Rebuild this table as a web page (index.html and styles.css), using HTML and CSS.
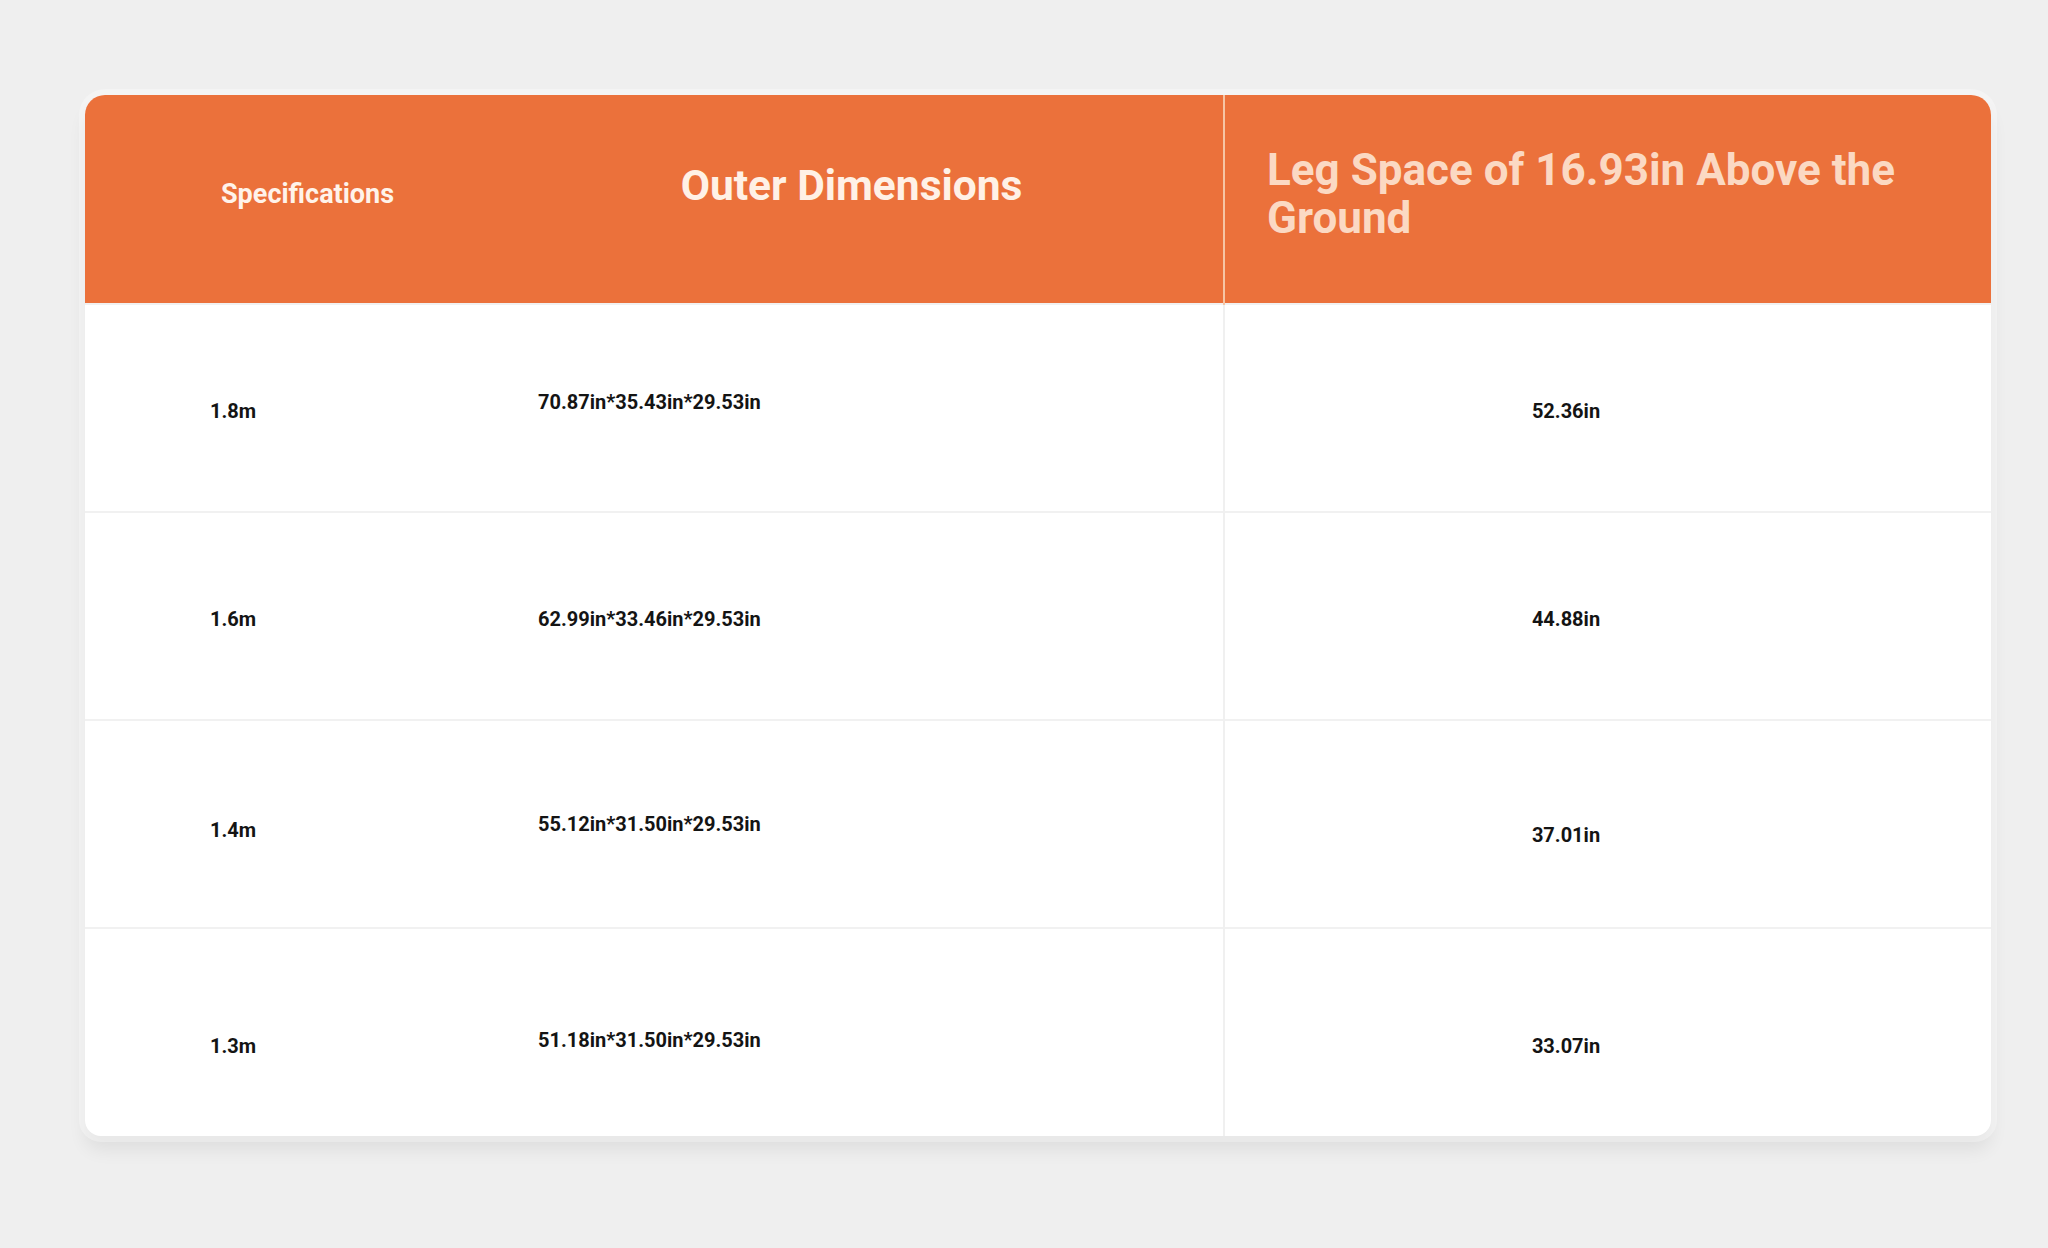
FILE: index.html
```html
<!DOCTYPE html>
<html lang="en">
  <head>
    <meta charset="UTF-8" />
    <meta name="viewport" content="width=device-width, initial-scale=1.0" />
    <title>Desk Sizes</title>
    <link rel="stylesheet" href="styles.css">
  </head>
  <body>
    <div id="page">
      <div id="card">
        <table id="specs">
          <colgroup>
            <col class="col-spec" />
            <col class="col-dims" />
            <col class="col-leg" />
          </colgroup>
          <thead>
            <tr>
              <th class="th-spec">Specifications</th>
              <th class="th-dims">Outer Dimensions</th>
              <th class="th-leg">Leg Space of 16.93in Above the Ground</th>
            </tr>
          </thead>
          <tbody>
            <tr>
              <td class="spec">1.8m</td>
              <td class="dims lift">70.87in*35.43in*29.53in</td>
              <td class="leg">52.36in</td>
            </tr>
            <tr>
              <td class="spec">1.6m</td>
              <td class="dims">62.99in*33.46in*29.53in</td>
              <td class="leg">44.88in</td>
            </tr>
            <tr>
              <td class="spec drop">1.4m</td>
              <td class="dims lift-sm">55.12in*31.50in*29.53in</td>
              <td class="leg drop-lg">37.01in</td>
            </tr>
            <tr class="low">
              <td class="spec">1.3m</td>
              <td class="dims lift-sm">51.18in*31.50in*29.53in</td>
              <td class="leg">33.07in</td>
            </tr>
          </tbody>
        </table>
      </div>
    </div>
  </body>
</html>
```

FILE: styles.css
```css
body {
  margin: 0;
  background: #efefef;
  font-family: Roboto, "Liberation Sans", sans-serif;
}
#page {
  height: 1248px;
  padding: 95px 57px 0 85px;
  box-sizing: border-box;
}
#card {
  width: 1906px;
  border-radius: 20px 20px 16px 16px;
  overflow: hidden;
  background: #fff;
  box-shadow: 0 0 0 6px rgba(255, 255, 255, 0.3), 0 14px 18px rgba(0, 0, 0, 0.07);
}
#specs {
  width: 100%;
  table-layout: fixed;
  border-collapse: collapse;
}
.col-spec {
  width: 395px;
}
.col-dims {
  width: 744px;
}
.col-leg {
  width: 767px;
}

/* header */
thead tr {
  height: 209px;
  background: #eb713b;
}
th {
  padding: 0 0 22px 0;
  font-weight: 700;
  vertical-align: middle;
}
.th-spec {
  text-align: left;
  padding-left: 136px;
  padding-top: 11px;
  font-size: 27px;
  color: #fff3ea;
}
.th-dims {
  font-size: 42.5px;
  color: #fff1e6;
  padding-bottom: 28px;
}
.th-leg {
  text-align: left;
  padding-left: 42px;
  padding-right: 30px;
  padding-bottom: 10px;
  font-size: 44px;
  line-height: 48px;
  color: #fbd9c3;
  border-left: 2px solid #f6c4a4;
}

/* rows */
tbody tr {
  height: 208px;
  border-top: 2px solid #f1f1f1;
}
td {
  padding: 5px 0 0 0;
  font-size: 20px;
  font-weight: 700;
  color: #141414;
  vertical-align: middle;
}
.spec {
  padding-left: 125px;
}
.dims {
  padding-left: 58px;
}
.leg {
  text-align: center;
  padding-right: 84px;
  border-left: 2px solid #f0f0f0;
}
.lift {
  padding-bottom: 18px;
}
.lift-sm {
  padding-bottom: 6px;
}
.drop {
  padding-top: 12px;
}
.drop-lg {
  padding-top: 22px;
}
.low td {
  padding-top: 27px;
}
.low td.dims {
  padding-top: 20px;
}
```
